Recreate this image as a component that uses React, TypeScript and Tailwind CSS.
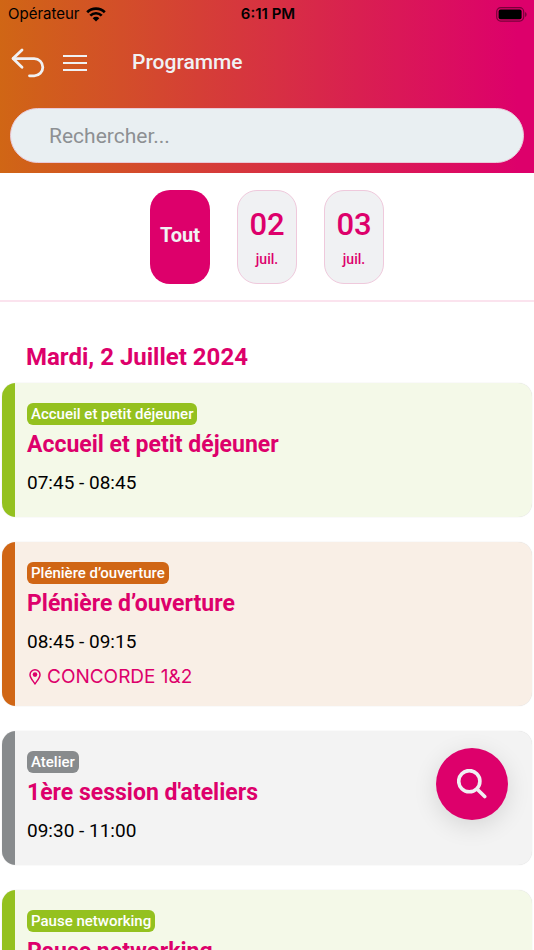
import { useState } from "react"

type Session = {
  id: number
  category: string
  title: string
  time: string
  room?: string
  card: string
  accent: string
}

const green = {
  card: "bg-[#f4f9e8]",
  accent: "bg-[#94c11f]",
}
const orange = {
  card: "bg-[#f9efe6]",
  accent: "bg-[#d06615]",
}
const gray = {
  card: "bg-[#f3f3f3]",
  accent: "bg-[#888b8d]",
}

const sessions: Session[] = [
  {
    id: 1,
    category: "Accueil et petit déjeuner",
    title: "Accueil et petit déjeuner",
    time: "07:45 - 08:45",
    ...green,
  },
  {
    id: 2,
    category: "Plénière d’ouverture",
    title: "Plénière d’ouverture",
    time: "08:45 - 09:15",
    room: "CONCORDE 1&2",
    ...orange,
  },
  {
    id: 3,
    category: "Atelier",
    title: "1ère session d'ateliers",
    time: "09:30 - 11:00",
    ...gray,
  },
  {
    id: 4,
    category: "Pause networking",
    title: "Pause networking",
    time: "11:00 - 11:30",
    ...green,
  },
]

const days = [
  { id: "02", month: "juil." },
  { id: "03", month: "juil." },
]

function WifiIcon() {
  return (
    <svg viewBox="0 0 20 15" className="h-[15px] w-5" aria-hidden="true">
      <path
        d="M1.2 5.200a12.600 12.600 0 0 1 17.600 0M4.300 8.600a8.100 8.100 0 0 1 11.400 0"
        fill="none"
        stroke="currentColor"
        strokeWidth="2.7"
      />
      <path
        d="M10 14.400 6.700 11.200a4.700 4.700 0 0 1 6.600 0z"
        fill="currentColor"
      />
    </svg>
  )
}

function BatteryIcon() {
  return (
    <svg viewBox="0 0 32 15" className="h-[15px] w-8" aria-hidden="true">
      <rect
        x="0.7"
        y="0.7"
        width="27"
        height="13.4"
        rx="4"
        fill="none"
        stroke="#000"
        strokeOpacity="0.45"
        strokeWidth="1.2"
      />
      <rect x="2.6" y="2.6" width="23" height="9.6" rx="2" />
      <path d="M29.2 5v5c1.8-.8 1.8-4.2 0-5z" fillOpacity="0.5" />
    </svg>
  )
}

function BackIcon() {
  return (
    <svg
      viewBox="0 0 34 30"
      className="h-[30px] w-[34px]"
      fill="none"
      stroke="currentColor"
      strokeWidth="2.8"
      strokeLinecap="round"
      strokeLinejoin="round"
      aria-hidden="true"
    >
      <path d="M11 2 2 10.600l9 8.600" />
      <path d="M2.4 10.600h20.800a8.600 8.600 0 0 1 0 17.200h-4.700" />
    </svg>
  )
}

function PinIcon() {
  return (
    <svg viewBox="0 0 12 16" className="h-4 w-3" aria-hidden="true">
      <path
        d="M6 15C4.8 12.6 1 9.2 1 5.8a5 5 0 0 1 10 0C11 9.2 7.2 12.6 6 15z"
        fill="none"
        stroke="currentColor"
        strokeWidth="1.5"
        strokeLinejoin="round"
      />
      <circle cx="6" cy="5.6" r="2.3" fill="currentColor" />
    </svg>
  )
}

function SearchIcon() {
  return (
    <svg
      viewBox="0 0 30 30"
      className="size-[30px]"
      fill="none"
      stroke="currentColor"
      strokeLinecap="round"
      aria-hidden="true"
    >
      <circle cx="12.3" cy="12.2" r="10.6" strokeWidth="3.6" />
      <path d="m20.500 20.500 7.200 7" strokeWidth="3.600" />
    </svg>
  )
}

function SessionCard({ session }: { session: Session }) {
  return (
    <li
      className={`flex overflow-hidden rounded-[14px] shadow-[0_0_1px_rgba(0,0,0,0.2)] ${session.card}`}
    >
      <div className={`w-[13px] shrink-0 ${session.accent}`} />
      <div className="min-w-0 flex-1 pt-5 pb-4 pl-3">
        <span
          className={`block w-fit rounded-md px-1 text-[15px] leading-[22px] font-medium text-white ${session.accent}`}
        >
          {session.category}
        </span>
        <h3 className="text-[23px] leading-10 font-bold text-[#dd006b]">
          {session.title}
        </h3>
        <p className="text-[19px] leading-9 text-black">{session.time}</p>
        {session.room && (
          <p className="flex h-[30px] items-center gap-1.5 pt-1 pl-0.5 font-['Inter',sans-serif] text-[19px] text-[#dd006b]">
            <PinIcon />
            {session.room}
          </p>
        )}
      </div>
    </li>
  )
}

export default function App() {
  const [day, setDay] = useState("all")
  const [query, setQuery] = useState("")

  return (
    <div className="relative flex h-dvh flex-col overflow-hidden bg-white font-['Roboto',sans-serif]">
      <header className="bg-linear-to-r/srgb from-[#d06615] to-[#dd006b] to-97%">
        <div className="grid h-7 grid-cols-3 items-center pr-1.5 pl-2 font-['Inter',sans-serif] text-[15px] text-black">
          <div className="flex items-center gap-1.5">
            Opérateur
            <WifiIcon />
          </div>
          <div className="text-center font-semibold">6:11 PM</div>
          <div className="flex justify-end">
            <BatteryIcon />
          </div>
        </div>

        <div className="flex h-[70px] items-center pl-[11px] text-[#f0f1f3]">
          <button type="button" aria-label="Retour">
            <BackIcon />
          </button>
          <button
            type="button"
            aria-label="Menu"
            className="ml-[18px] flex w-6 flex-col gap-[5px]"
          >
            <span className="h-0.5 w-full bg-current" />
            <span className="h-0.5 w-full bg-current" />
            <span className="h-0.5 w-full bg-current" />
          </button>
          <h1 className="ml-[45px] text-[21px] font-medium">Programme</h1>
        </div>

        <div className="px-2.5 py-2.5">
          <input
            type="search"
            aria-label="Rechercher"
            placeholder="Rechercher..."
            value={query}
            onChange={(e) => setQuery(e.target.value)}
            className="h-[55px] w-full rounded-full border border-[#e9c9d8] bg-[#e9eff2] px-[38px] text-[21px] text-gray-800 outline-none placeholder:text-[#8d9093]"
          />
        </div>
      </header>

      <nav className="flex justify-center gap-[27px] border-b-2 border-[#fbe3ee] pt-[17px] pb-4">
        <button
          type="button"
          onClick={() => setDay("all")}
          aria-pressed={day === "all"}
          className="h-[94px] w-[60px] rounded-[20px] bg-[#dd006b] pb-1 text-[20px] font-bold text-[#f0f1f3]"
        >
          Tout
        </button>
        {days.map((d) => (
          <button
            key={d.id}
            type="button"
            onClick={() => setDay(d.id)}
            aria-pressed={day === d.id}
            className="flex h-[94px] w-[60px] flex-col items-center rounded-[20px] border border-[#efc9dc] bg-[#f0f1f3] pt-3.5 font-medium text-[#dd006b]"
          >
            <span className="text-[31px] leading-10">{d.id}</span>
            <span className="text-[14px] leading-7">{d.month}</span>
          </button>
        ))}
      </nav>

      <main className="min-h-0 flex-1 overflow-y-auto [scrollbar-width:none]">
        <h2 className="pt-[38px] pl-[26px] text-[24px] leading-[34px] font-bold text-[#dd006b]">
          Mardi, 2 Juillet 2024
        </h2>
        <ul className="mt-[9px] flex flex-col gap-[25px] px-0.5 pb-6">
          {sessions.map((s) => (
            <SessionCard key={s.id} session={s} />
          ))}
        </ul>
      </main>

      <button
        type="button"
        aria-label="Rechercher une session"
        className="absolute right-[26px] bottom-[130px] flex size-[72px] items-center justify-center rounded-full bg-[#dd006b] text-[#f0f1f3] shadow-[0_6px_24px_rgba(0,0,0,0.12)]"
      >
        <SearchIcon />
      </button>
    </div>
  )
}
